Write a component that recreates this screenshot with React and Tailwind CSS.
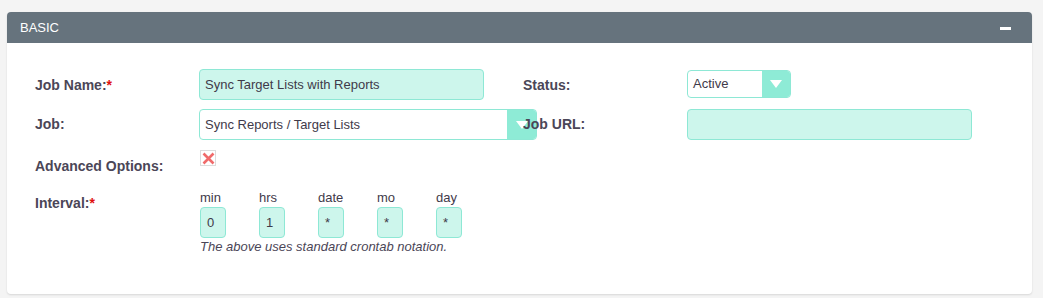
export default function App() {
  const labelCls = 'w-[164px] shrink-0 text-[14px] font-bold text-[#4b4657]'
  const cron = [
    { label: 'min', value: '0' },
    { label: 'hrs', value: '1' },
    { label: 'date', value: '*' },
    { label: 'mo', value: '*' },
    { label: 'day', value: '*' },
  ]

  return (
    <div
      className="h-[298px] w-[1043px] bg-[#f4f4f4] pt-[12px] pl-[7px] pr-[11px]"
      style={{ fontFamily: '"Liberation Sans", Arial, sans-serif' }}
    >
      <div className="rounded-[4px] bg-white shadow-[0_1px_2px_rgba(0,0,0,0.12)]">
        {/* header */}
        <div className="flex h-[31px] items-center justify-between rounded-t-[4px] bg-[#66737d] pl-[13px] pr-[21px]">
          <span className="text-[13px] leading-none text-white">BASIC</span>
          <span className="mt-[1px] block h-[3px] w-[11px] bg-white" />
        </div>

        {/* body */}
        <div className="h-[251px] pl-[28px] pt-[26px]">
          {/* row 1 */}
          <div className="flex h-[31px] items-center">
            <div className={`${labelCls} translate-y-[1px]`}>
              Job Name:<span className="text-[#e01010]">*</span>
            </div>
            <div className="w-[324px] shrink-0">
              <div className="flex h-[31px] w-[285px] items-center rounded-[4px] border border-[#8ee8d5] bg-[#cdf6ec] px-[5px] text-[13px] text-[#3f3a4a]">
                Sync Target Lists with Reports
              </div>
            </div>
            <div className={`${labelCls} translate-y-[1px]`}>Status:</div>
            <div className="flex h-[28px] w-[104px] -translate-y-[1px] overflow-hidden rounded-[4px] border border-[#8ee8d5] bg-white">
              <div className="flex flex-1 items-center px-[5px] text-[13px] text-[#3f3a4a]">Active</div>
              <div className="flex w-[28px] items-center justify-center bg-[#8eebd6]">
                <svg width="12" height="8" viewBox="0 0 12 8">
                  <path d="M0 0H12L6 8Z" fill="#fff" />
                </svg>
              </div>
            </div>
          </div>

          {/* row 2 */}
          <div className="mt-[9px] flex h-[31px] items-center">
            <div className={labelCls}>Job:</div>
            <div className="relative w-[324px] shrink-0">
              <div className="flex h-[31px] w-[338px] overflow-hidden rounded-[4px] border border-[#8ee8d5] bg-white">
                <div className="flex flex-1 items-center px-[5px] text-[13px] text-[#3f3a4a]">
                  Sync Reports / Target Lists
                </div>
                <div className="flex w-[29px] items-center justify-center bg-[#8eebd6]">
                  <svg width="12" height="8" viewBox="0 0 12 8">
                    <path d="M0 0H12L6 8Z" fill="#fff" />
                  </svg>
                </div>
              </div>
            </div>
            <div className={`${labelCls} relative`}>Job URL:</div>
            <div className="h-[31px] w-[285px] rounded-[4px] border border-[#8ee8d5] bg-[#cdf6ec]" />
          </div>

          {/* row 3 */}
          <div className="mt-[9px] flex">
            <div className={`${labelCls} pt-[7px]`}>Advanced Options:</div>
            <div className="ml-[1px] mt-[1px] flex h-[16px] w-[16px] items-center justify-center border border-[#dcdcdc] bg-white">
              <svg width="13" height="13" viewBox="0 0 13 13">
                <path d="M1.5 1.5L11.5 11.5M11.5 1.5L1.5 11.5" stroke="#f06b6b" strokeWidth="2.6" />
              </svg>
            </div>
          </div>

          {/* row 4 */}
          <div className="mt-[12px] flex">
            <div className={`${labelCls} pt-[4px]`}>
              Interval:<span className="text-[#e01010]">*</span>
            </div>
            <div className="ml-[1px]">
              <div className="flex gap-[33px]">
                {cron.map((c) => (
                  <div key={c.label} className="flex w-[26px] flex-col">
                    <div className="h-[17px] whitespace-nowrap text-[13px] leading-[17px] text-[#3f3a4a]">{c.label}</div>
                    <div className="mt-[1px] flex h-[31px] w-[26px] items-center rounded-[4px] border border-[#8ee8d5] bg-[#cdf6ec] px-[6px] text-[13px] text-[#3f3a4a]">
                      {c.value}
                    </div>
                  </div>
                ))}
              </div>
              <div className="mt-[1px] text-[13px] italic leading-[16px] text-[#4b4657]">
                The above uses standard crontab notation.
              </div>
            </div>
          </div>
        </div>
      </div>
    </div>
  )
}
